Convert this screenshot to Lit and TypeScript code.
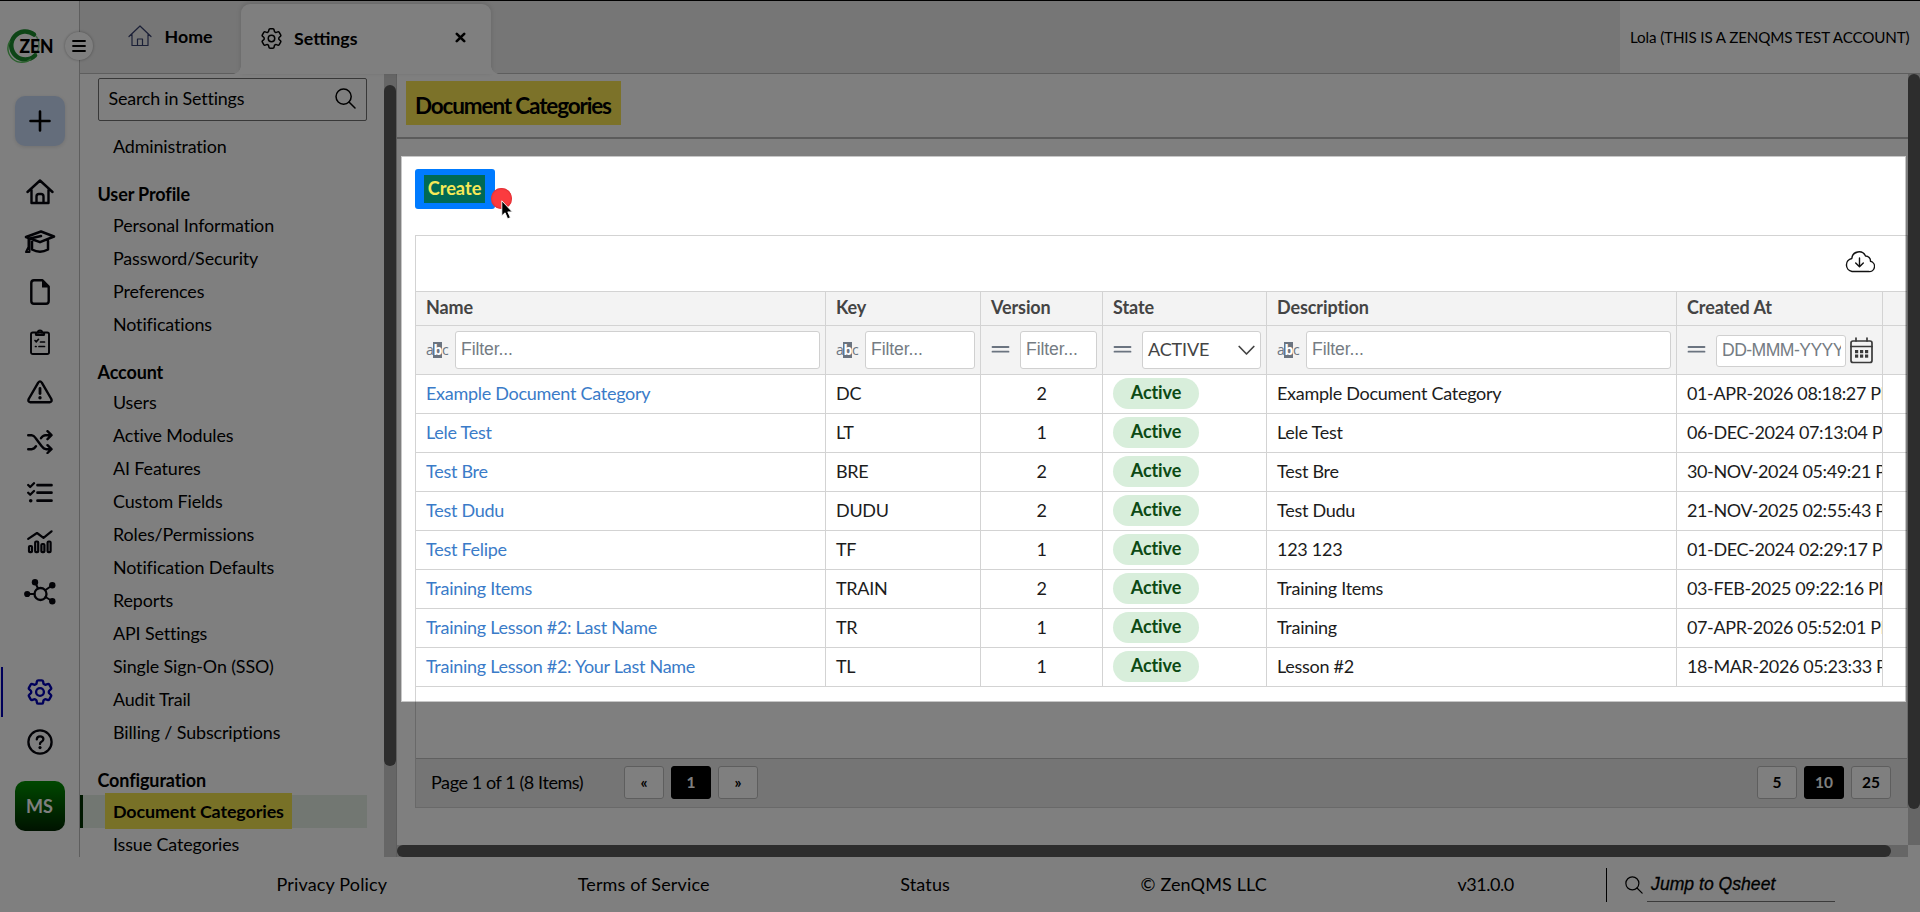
import { LitElement, html, css, svg, nothing } from "lit";
import { customElement } from "lit/decorators.js";
import { classMap } from "lit/directives/class-map.js";

const icon = (w: number, h: number, body: unknown, sw = 2, box = `0 0 ${w} ${h}`) => html`
  <svg width=${w} height=${h} viewBox=${box} fill="none" stroke="currentColor"
    stroke-width=${sw} stroke-linecap="round" stroke-linejoin="round">${body}</svg>`;

const gearBody = svg`<path d="M9.594 3.94c.09-.542.56-.94 1.11-.94h2.593c.55 0 1.02.398 1.11.94l.213 1.281c.063.374.313.686.645.87.074.04.147.083.22.127.325.196.72.257 1.075.124l1.217-.456a1.125 1.125 0 0 1 1.37.49l1.296 2.247a1.125 1.125 0 0 1-.26 1.431l-1.003.827c-.293.241-.438.613-.43.992a7.723 7.723 0 0 1 0 .255c-.008.378.137.75.43.991l1.004.827c.424.35.534.955.26 1.43l-1.298 2.247a1.125 1.125 0 0 1-1.369.491l-1.217-.456c-.355-.133-.75-.072-1.076.124a6.47 6.47 0 0 1-.22.128c-.331.183-.581.495-.644.869l-.213 1.281c-.09.543-.56.94-1.11.94h-2.594c-.55 0-1.019-.398-1.11-.94l-.213-1.281c-.062-.374-.312-.686-.644-.87a6.52 6.52 0 0 1-.22-.127c-.325-.196-.72-.257-1.076-.124l-1.217.456a1.125 1.125 0 0 1-1.369-.49l-1.297-2.247a1.125 1.125 0 0 1 .26-1.431l1.004-.827c.292-.24.437-.613.43-.991a6.932 6.932 0 0 1 0-.255c.007-.38-.138-.751-.43-.992l-1.004-.827a1.125 1.125 0 0 1-.26-1.43l1.297-2.247a1.125 1.125 0 0 1 1.37-.491l1.216.456c.356.133.751.072 1.076-.124.072-.044.146-.086.22-.128.332-.183.582-.495.644-.869l.214-1.28Z"/><circle cx="12" cy="12" r="3"/>`;
const searchIcon = (s: number, sw: number) =>
  icon(s, s, svg`<circle cx="8.6" cy="8.6" r="7.6"/><path d="m14 14 6 6"/>`, sw, "0 0 21 21");

const railIcons = [
  icon(28, 26, svg`<path d="M1.5 13 14 1.500l12.500 11.500M5.500 10.500v13.500h17V10.500M10.500 24V17.500q0-2.500 2.500-2.500h2q2.500 0 2.500 2.500v6.500"/>`, 2.4),
  icon(32, 24, svg`<path d="M2 7 17 1.500 30 6.500 16 12.200 6 8.500M2 7l4 1.500L17 6M8 11v8.500q8 4.500 16 0V11" stroke-width="2.500"/><path d="M4.500 9v8L2 22h3.500V9" stroke-width="2"/>`),
  icon(20, 26, svg`<path d="M4 1.300h8.500L18.700 7.500V22q0 2.700-2.700 2.700H4Q1.300 24.700 1.300 22V4Q1.300 1.300 4 1.300Z" stroke-width="2.400"/><path d="M12 1.500v7h7Z" fill="currentColor" stroke="none"/>`),
  icon(20, 26, svg`<rect x="1" y="3.500" width="18" height="21.500" rx="1.800"/><path d="M6 4V5.800h8V4M8 3.500a2 2 0 1 1 4 0" stroke-width="2.200"/><path d="m5 11.500 1.300 1.300L8.500 10.300M10.500 13h4M9 17.500h5.500M5.500 17.500h.6" stroke-width="1.700"/>`, 1.9),
  icon(26, 24, svg`<path d="M11.200 2.600 1.700 19q-1 3 1.500 3.200h19.600q2.500-.2 1.500-3.200L14.800 2.600q-1.800-2.400-3.600 0Z"/><circle cx="13" cy="17.800" r="1.700" fill="currentColor" stroke="none"/><path d="M13 8.500v5" stroke-width="2.800"/>`, 2.4),
  icon(26, 24, svg`<path d="M1.200 5.200h3.500q2 0 4 3l6 8q2 3 4.500 3H24M1.200 19.200h3.500q2.500 0 4.300-3M14 8.200q2-3 4.500-3H24M20.500 1.200 24.500 5.200 20.500 9.200M20.500 15.200 24.500 19.200 20.500 23"/>`, 2.4),
  icon(26, 21, svg`<path d="M10.500 3.200h14M10.500 10.700h14M10.500 18.700h14" stroke-width="2.700"/><path d="m1.200 3 2 2L7 1.200M1.200 10.700l2 2L7 9"/><circle cx="3.700" cy="18.700" r="1.800" fill="currentColor" stroke="none"/>`, 2.3),
  icon(26, 24, svg`<path d="M1.200 8.800 10 3l6.500 4.800L24.500 1.300"/><rect x="2" y="16" width="3" height="6.200" rx="1"/><rect x="8.200" y="11.500" width="3" height="10.700" rx="1"/><rect x="14.400" y="14" width="3" height="8.200" rx="1"/><rect x="20.600" y="11.500" width="3" height="10.700" rx="1"/>`, 2.2),
  icon(32, 26, svg`<circle cx="16.500" cy="15" r="6" stroke-width="2.300"/><path d="M3 15h7.500M11 3l3 6.500M28 6.500l-6.500 4.500M28 22l-6.500-4"/><g fill="currentColor" stroke="none"><circle cx="3.200" cy="15" r="3.100"/><circle cx="11" cy="3.300" r="3.200"/><circle cx="28.300" cy="6.300" r="3.200"/><circle cx="28.300" cy="22.200" r="3.200"/></g>`),
];

interface NavGroup { heading?: string; items: string[] }
const groups: NavGroup[] = [
  { items: ["Administration"] },
  { heading: "User Profile", items: ["Personal Information", "Password/Security", "Preferences", "Notifications"] },
  { heading: "Account", items: ["Users", "Active Modules", "AI Features", "Custom Fields", "Roles/Permissions", "Notification Defaults", "Reports", "API Settings", "Single Sign-On (SSO)", "Audit Trail", "Billing / Subscriptions"] },
  { heading: "Configuration", items: ["Document Categories", "Issue Categories"] },
];

const columns = [
  { title: "Name", kind: "text" }, { title: "Key", kind: "text" }, { title: "Version", kind: "number" },
  { title: "State", kind: "select" }, { title: "Description", kind: "text" }, { title: "Created At", kind: "date" },
];
const rows: [string, string, number, string, string][] = [
  ["Example Document Category", "DC", 2, "Example Document Category", "01-APR-2026 08:18:27 PM"],
  ["Lele Test", "LT", 1, "Lele Test", "06-DEC-2024 07:13:04 PM"],
  ["Test Bre", "BRE", 2, "Test Bre", "30-NOV-2024 05:49:21 PM"],
  ["Test Dudu", "DUDU", 2, "Test Dudu", "21-NOV-2025 02:55:43 PM"],
  ["Test Felipe", "TF", 1, "123 123", "01-DEC-2024 02:29:17 PM"],
  ["Training Items", "TRAIN", 2, "Training Items", "03-FEB-2025 09:22:16 PM"],
  ["Training Lesson #2: Last Name", "TR", 1, "Training", "07-APR-2026 05:52:01 PM"],
  ["Training Lesson #2: Your Last Name", "TL", 1, "Lesson #2", "18-MAR-2026 05:23:33 PM"],
];

@customElement("side-rail")
class SideRail extends LitElement {
  static styles = css`
    :host { display: flex; flex-direction: column; align-items: center; box-sizing: border-box;
      width: 80px; background: #fff; border-right: 1px solid #bcbcbc; }
    svg { display: block; }
    .brand { position: relative; align-self: stretch; height: 95px; }
    .logo { position: absolute; left: 7px; top: 26px; }
    .toggle { position: absolute; left: 65px; top: 31px; width: 28px; height: 28px; border-radius: 50%;
      background: #fff; box-shadow: 0 0 3px rgba(0,0,0,.35); display: grid; place-items: center; z-index: 2; }
    .add { width: 50px; height: 50px; border-radius: 10px; background: #c9dbf7; display: grid; place-items: center;
      margin-bottom: 21px; box-shadow: 0 1px 4px rgba(0,0,0,.12); }
    .slot { align-self: stretch; height: 50px; display: grid; place-items: center; color: #05050c; }
    .active { color: #0000b4; margin-top: 50px; box-sizing: border-box; border-left: 2px solid #0000b4; margin-left: 1px; padding-right: 2px; }
    .avatar { width: 50px; height: 50px; margin-top: 14px; border-radius: 10px; display: grid; place-items: center;
      background: linear-gradient(#009000, #002600); color: #fff; font: bold 18px Lato, sans-serif; }
  `;
  render() {
    return html`
      <div class="brand">
        <svg class="logo" width="50" height="38" viewBox="0 0 50 38">
          <path d="M27 7.500A14 14 0 1 0 28 28.500" fill="none" stroke="#1b8a2c" stroke-width="4.500" stroke-linecap="round"/>
          <path d="M28 28A15 15 0 0 0 29 9" fill="none" stroke="#2fa53c" stroke-width="1.500" opacity=".6"/>
          <path d="M3 14A14 14 0 0 0 24 32" fill="none" stroke="#56c25b" stroke-width="1.500"/>
          <text x="12.500" y="25.500" font-family="Lato" font-weight="900" font-size="19.500" textLength="34" lengthAdjust="spacingAndGlyphs" fill="#000">ZEN</text>
        </svg>
        <div class="toggle">${icon(14, 12, svg`<path d="M1 1h12M1 6h12M1 11h12"/>`, 1.8)}</div>
      </div>
      <div class="add">${icon(22, 22, svg`<path d="M11 1.500v19M1.500 11h19"/>`, 2.6)}</div>
      ${railIcons.map((i) => html`<div class="slot">${i}</div>`)}
      <div class="slot active">${icon(26, 26, gearBody, 1.8, "2 2 20 20")}</div>
      <div class="slot">${icon(26, 26, svg`<circle cx="13" cy="13" r="11.600"/><path d="M9.800 10.300q.2-3 3.300-3t3.300 2.700q0 1.800-1.900 2.700-1.500.700-1.500 2.300"/><circle cx="13" cy="18.600" r="1.600" fill="currentColor" stroke="none"/>`, 2.3)}</div>
      <div class="avatar">MS</div>`;
  }
}

@customElement("tab-bar")
class TabBar extends LitElement {
  static styles = css`
    :host { display: flex; box-sizing: border-box; height: 73px; background: #ececec; border-bottom: 1px solid #bcbcbc;
      font: bold 17.8px Lato, sans-serif; color: #000; }
    svg { display: block; }
    .home { width: 161px; box-sizing: border-box; padding: 0 0 2px 48px; display: flex; align-items: center; gap: 12.5px; color: #000; }
    .home svg { color: #37406e; }
    .tab { position: relative; width: 250px; height: 70px; box-sizing: border-box; margin-top: 3px; padding: 0 25px 2px 20px; background: #fff;
      border-radius: 9px 9px 0 0; display: flex; align-items: center; gap: 12px; box-shadow: 0 -1px 5px rgba(0,0,0,.14); z-index: 1; }
    .tab::before, .tab::after { content: ""; position: absolute; bottom: 0; width: 8px; height: 8px; }
    .tab::before { left: -8px; background: radial-gradient(circle at 0 0, transparent 7.5px, #fff 8px); }
    .tab::after { right: -8px; background: radial-gradient(circle at 100% 0, transparent 7.5px, #fff 8px); }
    .close { margin-left: auto; margin-top: -2px; }
    .user { margin-left: auto; width: 300px; box-sizing: border-box; padding: 0 0 0 10px; background: #fff; display: flex; align-items: center;
      font: 15.2px Lato, sans-serif; letter-spacing: -.14px; white-space: nowrap; }
  `;
  render() {
    return html`
      <div class="home">${icon(24, 22, svg`<path d="M1 11.500 12 1l11 10.500M4 9.500v11h16v-11M9.500 20.500V14h5v6.500"/>`, 1.2)}<span>Home</span></div>
      <div class="tab">${icon(21, 21, gearBody, 1.4, "2.3 2.3 19.4 19.4")}<span>Settings</span>
        <span class="close">${icon(11, 11, svg`<path d="m1.800 1.800 7.400 7.400M9.200 1.800 1.800 9.200"/>`, 2.6)}</span></div>
      <div class="user">Lola (THIS IS A ZENQMS TEST ACCOUNT)</div>`;
  }
}

@customElement("settings-nav")
class SettingsNav extends LitElement {
  static styles = css`
    :host { display: flex; width: 317px; background: #fff; font: 17.9px Lato, sans-serif; letter-spacing: -.12px; color: #000; overflow: hidden; border-right: 1px solid #bcbcbc; box-sizing: border-box; }
    svg { display: block; }
    .list { flex: 1; padding-top: 4px; height: 783px; box-sizing: border-box; overflow: hidden; }
    .search { margin: 0 17px 9px 18px; height: 43px; box-sizing: border-box; border: 1px solid #707070; border-radius: 2px; padding: 0 10px 3px 9.5px;
      display: flex; align-items: center; justify-content: space-between; letter-spacing: -.2px; }
    .item { height: 33px; line-height: 33px; padding-left: 33px; white-space: nowrap; }
    .heading { height: 45.6px; box-sizing: border-box; padding: 15px 0 0 17.5px; line-height: 33px; font-weight: bold; font-size: 18px; }
    .current { margin-right: 17px; padding-left: 22px; border-left: 3px solid #003000; background: #e5efe5; font-weight: bold; }
    .mark { display: inline-block; height: 36px; margin-top: -2px; line-height: 36px; padding: 0 8px; background: #f0e34e; }
    .track { width: 12px; background: #ccc; padding-top: 11px; box-sizing: border-box; }
    .thumb { height: 681px; border-radius: 6px; background: #5a5a5a; }
  `;
  render() {
    return html`
      <div class="list">
        <div class="search"><span>Search in Settings</span>${searchIcon(21, 1.5)}</div>
        ${groups.map((g) => html`
          ${g.heading ? html`<div class="heading">${g.heading}</div>` : nothing}
          ${g.items.map((i) => {
            const current = i === "Document Categories";
            return html`<div class=${classMap({ item: true, current })}>${current ? html`<span class="mark">${i}</span>` : i}</div>`;
          })}`)}
      </div>
      <div class="track"><div class="thumb"></div></div>`;
  }
}

@customElement("category-grid")
class CategoryGrid extends LitElement {
  static styles = css`
    :host { display: block; box-sizing: border-box; width: 1493px; height: 573px; border: 1px solid #d3d3d3; font: 18px Lato, sans-serif; color: #1c1c1c; }
    svg { display: block; }
    .tools { height: 55px; display: flex; align-items: center; justify-content: flex-end; padding: 0 32px 3px 0; box-sizing: border-box; color: #111; }
    .row { display: grid; grid-template-columns: 410px 155px 122px 164px 410px 206px 1fr; border-bottom: 1px solid #d3d3d3; height: 38px; }
    .row > div { border-right: 1px solid #d3d3d3; padding: 0 10px 2px; display: flex; align-items: center; overflow: hidden; white-space: nowrap; letter-spacing: -.28px; }
    .row > div:last-child { border-right: 0; }
    .row > .num { justify-content: center; }
    .row > .state { padding-bottom: 1px; letter-spacing: -.12px; }
    .row > .date { letter-spacing: -.38px; padding-right: 0; }
    .head { height: 33px; background: #f3f3f3; border-top: 1px solid #d3d3d3; font-weight: bold; color: #444; }
    .row.head > div { letter-spacing: -.1px; padding-bottom: 3px; }
    .filters { height: 48px; background: #f3f3f3; }
    .row.filters > div { padding: 0 5px 0 10px; }
    .op { width: 29px; flex: none; color: #6b7480; display: flex; }
    .abc { font: 14px "Open Sans", sans-serif; line-height: 16px; letter-spacing: -.8px; display: flex; }
    .abc b { background: #6b7480; color: #fff; padding: 0 .5px; }
    .field { flex: 1; min-width: 0; height: 38px; box-sizing: border-box; border: 1px solid #d0d0d0; border-radius: 3px; background: #fff;
      display: flex; align-items: center; padding: 0 5px 2px; font: 17.6px "Liberation Sans", sans-serif; letter-spacing: -.1px; color: #757c83; overflow: hidden; }
    .select { font-family: Lato, sans-serif; font-size: 18px; color: #444; justify-content: space-between; padding-bottom: 2px; letter-spacing: -.15px; }
    .select svg { margin-top: 3px; }
    .short { flex: none; width: 130px; height: 32px; margin-right: 4px; margin-top: 2px; }
    .clip { overflow: hidden; width: 119px; letter-spacing: -.55px; flex: none; }
    .cal { color: #3a3a3a; margin-top: 0; }
    a { color: #3a7bc8; text-decoration: none; }
    .badge { background: #d8eedb; color: #0c4a14; font-weight: bold; width: 86px; height: 31px; line-height: 29px; text-align: center; border-radius: 16px; }
    .space { height: 71px; border-bottom: 1px solid #c0c0c0; }
    .pager { height: 48px; background: #ebebeb; display: flex; align-items: center; gap: 7px; padding: 0 16px 2px 15px; box-sizing: border-box; }
    .info { width: 186px; color: #000; letter-spacing: -.42px; }
    .btn { width: 40px; height: 33px; box-sizing: border-box; border: 1px solid #bdbdbd; border-radius: 3px; background: #fff; color: #000;
      display: grid; place-items: center; font: bold 15.5px Lato, sans-serif; }
    .on { background: #000; border-color: #000; color: #fff; }
    .grow { flex: 1; }
  `;
  private filter(kind: string) {
    const eq = icon(20, 10, svg`<path d="M1.500 2h16M1.500 6.700h16"/>`, 1.8);
    const op = html`<span class="op">${kind === "text" ? html`<span class="abc">a<b>b</b>c</span>` : eq}</span>`;
    if (kind === "select") return html`${op}<span class="field select">ACTIVE${icon(17, 11, svg`<path d="m1.200 1.500 7.300 7.500 7.300-7.500"/>`, 1.7)}</span>`;
    if (kind === "date") return html`${op}<span class="field short"><span class="clip">DD-MMM-YYYY</span></span>
      <span class="cal">${icon(23, 27, svg`<rect x="1" y="4" width="21" height="21.500" rx="2"/><path d="M1 9.500h21M6 1v3M17 1v3"/><g fill="currentColor" stroke="none">${[13, 17.5].map((y) => [5, 10, 15].map((x) => svg`<rect x=${x} y=${y} width="3.200" height="3.200"/>`))}</g>`, 1.7)}</span>`;
    return html`${op}<span class="field">Filter...</span>`;
  }
  render() {
    return html`
      <div class="tools">${icon(30, 22, svg`<path d="M7 20.500h16.500a5.200 5.200 0 0 0 2-10.200 5 5 0 0 0-5-5.300A7.200 7.200 0 0 0 6.800 7.500 6.600 6.600 0 0 0 7 20.500ZM14.500 7v8.500M10.700 12l3.800 3.800 3.800-3.800"/>`, 1.4)}</div>
      <div class="row head">${columns.map((c) => html`<div>${c.title}</div>`)}<div></div></div>
      <div class="row filters">${columns.map((c) => html`<div>${this.filter(c.kind)}</div>`)}<div></div></div>
      ${rows.map(([name, key, version, description, created]) => html`
        <div class="row"><div><a>${name}</a></div><div>${key}</div><div class="num">${version}</div>
          <div class="state"><span class="badge">Active</span></div><div>${description}</div><div class="date">${created}</div><div></div></div>`)}
      <div class="space"></div>
      <div class="pager"><span class="info">Page 1 of 1 (8 Items)</span>
        <span class="btn">«</span><span class="btn on">1</span><span class="btn">»</span><span class="grow"></span>
        <span class="btn">5</span><span class="btn on">10</span><span class="btn">25</span></div>`;
  }
}

@customElement("app-root")
class AppRoot extends LitElement {
  static styles = css`
    :host { display: grid; position: relative; box-sizing: border-box; width: 100%; height: 912px; overflow: hidden; border-top: 1px solid #000;
      grid-template-columns: 80px 317px 1fr; grid-template-rows: 73px 783px 55px; background: #fff; font: 18px Lato, sans-serif; color: #000; }
    svg { display: block; }
    side-rail { grid-row: 1 / 3; position: relative; z-index: 2; }
    tab-bar { grid-column: 2 / 4; }
    .main { display: grid; grid-template-columns: 1fr 12px; grid-template-rows: 771px 12px; min-width: 0; }
    .view { overflow: hidden; }
    .title { height: 65px; box-sizing: border-box; border-bottom: 2px solid #b6b6b6; padding: 7px 0 0 9px; display: flex; align-items: flex-start; }
    .title h1 { margin: 0; height: 44px; line-height: 50px; width: 215px; box-sizing: border-box; padding-left: 9px; background: #f8e452;
      font-size: 22.5px; letter-spacing: -1.15px; white-space: nowrap; }
    .actions { padding: 30px 0 26px 18px; }
    .create { width: 80px; height: 40px; box-sizing: border-box; padding: 0 9px; border-radius: 3px; background: #007bff; display: flex; align-items: center; }
    .create span { height: 28px; line-height: 27px; width: 61px; background: #006a55; color: #f7e957; font-weight: bold; font-size: 18.2px; text-align: center; }
    category-grid { margin-left: 18px; }
    .vtrack { background: #ccc; }
    .vthumb { height: 735px; border-radius: 6px; background: #5a5a5a; }
    .htrack { background: #ccc; }
    .hthumb { width: 1494px; height: 12px; border-radius: 6px; background: #5a5a5a; }
    footer { grid-column: 1 / 4; display: flex; align-items: center; gap: 190.5px; padding: 0 0 1px 276.5px; white-space: nowrap; letter-spacing: .15px; }
    .version { letter-spacing: -.5px; }
    .jump { margin-left: -98px; height: 34px; border-left: 1px solid #000; padding-left: 18px; display: flex; align-items: center; gap: 4px; margin-top: 1px; }
    .jump span { width: 184px; height: 33px; padding-left: 4px; border-bottom: 1px solid #777; letter-spacing: 0;
      font: italic 17.6px/32px "Liberation Sans", sans-serif; -webkit-text-stroke: .3px #000; }
    .spot { position: absolute; left: 401px; top: 155px; width: 1505px; height: 546px; box-sizing: border-box; border: 1px solid rgba(0,0,0,.22);
      box-shadow: 0 0 0 2000px rgba(0,0,0,.5); pointer-events: none; z-index: 5; }
    .dot { position: absolute; left: 491px; top: 187px; width: 21px; height: 21px; border-radius: 50%; background: #fb3b3f; box-shadow: inset 0 0 1px 1px #e03438; z-index: 6; }
    .pointer { position: absolute; left: 501px; top: 199px; z-index: 7; }
  `;
  render() {
    return html`
      <side-rail></side-rail>
      <tab-bar></tab-bar>
      <settings-nav></settings-nav>
      <div class="main">
        <div class="view">
          <div class="title"><h1>Document Categories</h1></div>
          <div class="actions"><div class="create"><span>Create</span></div></div>
          <category-grid></category-grid>
        </div>
        <div class="vtrack"><div class="vthumb"></div></div>
        <div class="htrack"><div class="hthumb"></div></div>
        <div></div>
      </div>
      <footer>
        <span>Privacy Policy</span><span>Terms of Service</span><span>Status</span><span>© ZenQMS LLC</span><span class="version">v31.0.0</span>
        <div class="jump">${searchIcon(18, 1.4)}<span>Jump to Qsheet</span></div>
      </footer>
      <div class="spot"></div>
      <div class="dot"></div>
      <svg class="pointer" width="12" height="20" viewBox="0 0 12 20"><path d="M.8.8v15l3.300-3 2.500 6 2.800-1.200-2.600-5.700h4.500Z" fill="#000" stroke="#fff" stroke-width=".9"/></svg>`;
  }
}
